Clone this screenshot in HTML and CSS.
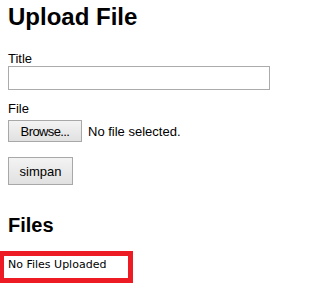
FILE: index.html
```html
<!DOCTYPE html>
<html>
<head>
<meta charset="utf-8">
<link rel="stylesheet" href="styles.css">
</head>
<body>
<h1 class="title">Upload File</h1>
<form class="form">
  <label class="label" for="t">Title</label>
  <input class="text" id="t" type="text">
  <label class="label label-file">File</label>
  <div class="file">
    <button type="button" class="btn btn-browse">Browse...</button>
    <span class="file-status">No file selected.</span>
  </div>
  <button type="button" class="btn btn-save">simpan</button>
</form>
<h2 class="subtitle">Files</h2>
<div class="empty">No Files Uploaded</div>
</body>
</html>
```
FILE: styles.css
```css
html, body {
  background: #fff;
}
body {
  margin: 0;
  padding: 3px 8px 0 8px;
  font-family: "Liberation Sans", Arial, sans-serif;
  font-size: 13px;
  color: #000;
}
.title {
  margin: 0;
  font-size: 24px;
  line-height: 28px;
  font-weight: bold;
}
.form {
  margin: 20px 0 0 0;
  display: flex;
  flex-direction: column;
  align-items: flex-start;
}
.label {
  display: block;
  line-height: 15px;
}
.text {
  box-sizing: border-box;
  width: 262px;
  height: 24px;
  margin: 0;
  border: 1px solid #ababab;
  background: #fff;
  padding: 2px 4px;
}
.label-file {
  margin-top: 11px;
}
.file {
  margin-top: 4px;
  display: flex;
  align-items: center;
  gap: 6px;
}
.btn {
  box-sizing: border-box;
  margin: 0;
  font-family: "Liberation Sans", Arial, sans-serif;
  color: #000;
  border: 1px solid #a8a8a8;
  border-radius: 0;
  background: linear-gradient(#f3f3f3, #e1e1e1);
  padding: 0;
}
.btn-browse {
  width: 74px;
  height: 22px;
  font-size: 13px;
  letter-spacing: -0.6px;
}
.file-status {
  font-size: 13px;
}
.btn-save {
  margin-top: 15px;
  width: 65px;
  height: 28px;
  font-size: 13px;
}
.subtitle {
  margin: 28px 0 0 0;
  font-size: 20px;
  line-height: 24px;
  font-weight: bold;
}
.empty {
  margin: 14px 0 0 -8px;
  width: 120px;
  height: 22px;
  border: 5px solid #ed1c24;
  border-left-width: 4px;
  padding-left: 4px;
  box-sizing: content-box;
  font-family: "DejaVu Sans", sans-serif;
  font-size: 11px;
  line-height: 18px;
}
```
